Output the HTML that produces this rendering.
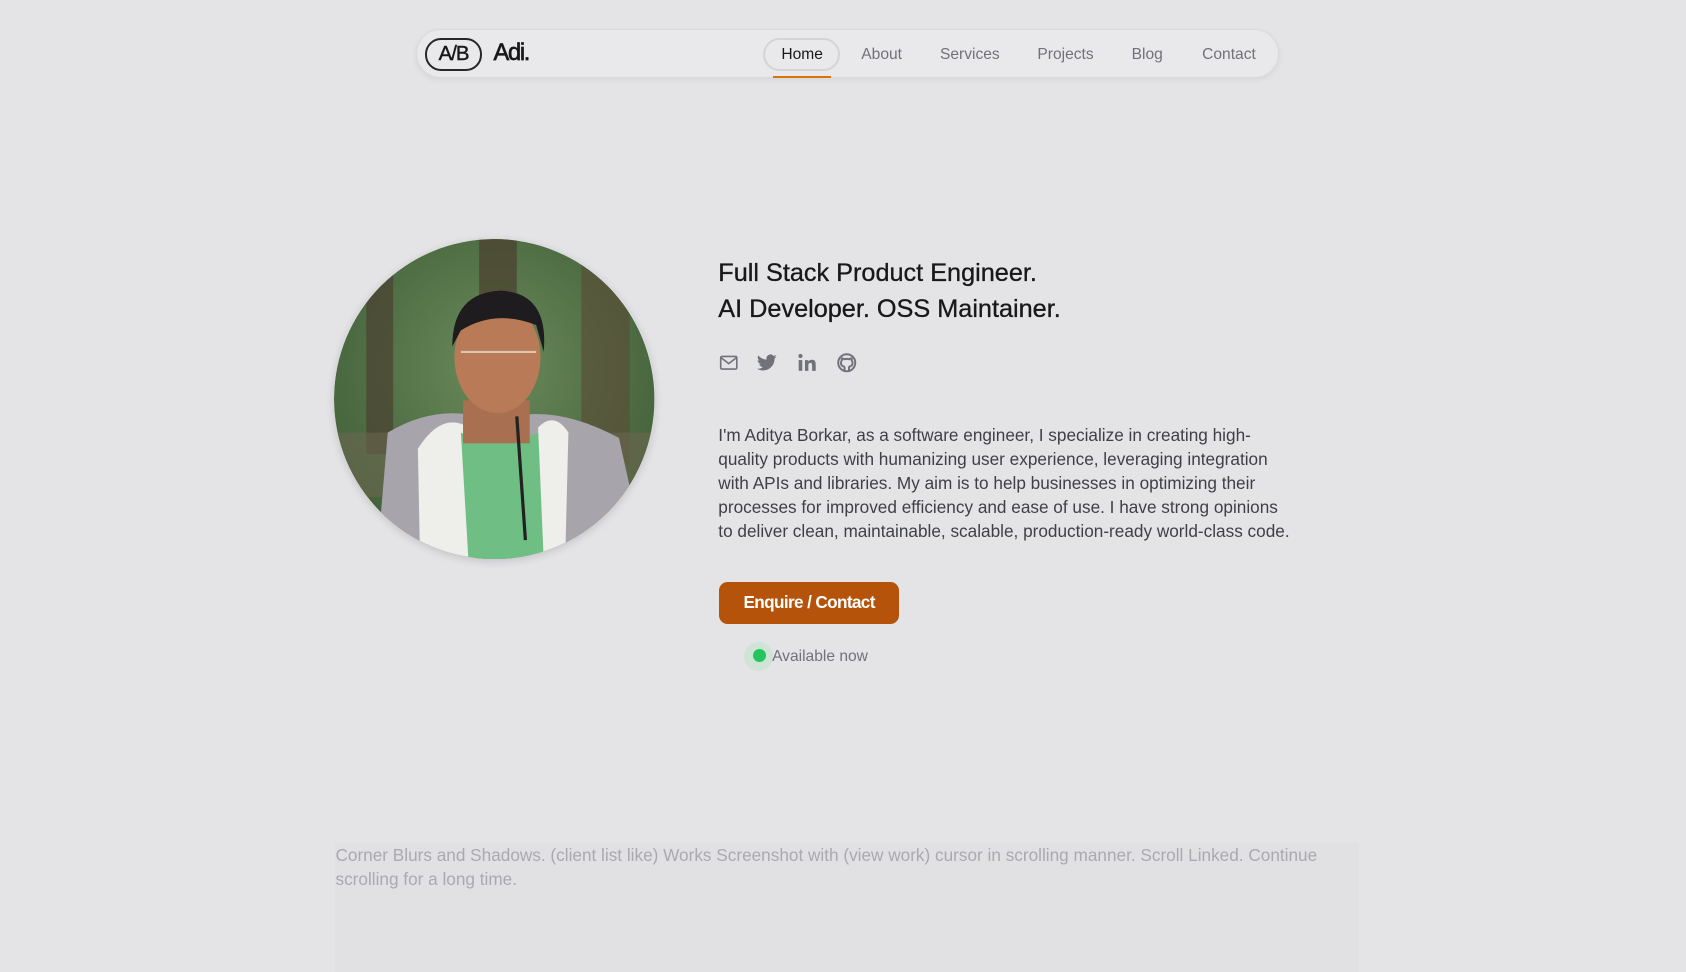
<!DOCTYPE html>
<html><head><meta charset="utf-8"><style>
html{zoom:1.0753}
body{margin:0;width:1568px;height:892px;background:#e4e4e7;font-family:"Liberation Sans",sans-serif;position:relative;overflow:hidden}
.a{position:absolute}
.nav{left:387px;top:27px;width:801px;height:44px;border-radius:23px;background:#e9e9eb;border:1px solid #d9d9dc;box-shadow:0 2px 6px rgba(0,0,0,.06)}
.ni{position:absolute;top:15px;font-size:14.5px;color:#71717a;transform:translateX(-50%)}
.ic{position:absolute;top:327px;width:20px;height:20px}
p{margin:0}
</style></head><body>
<div class="a nav">
  <div class="a" style="left:7px;top:7px;width:50px;height:27px;border:2px solid #27272a;border-radius:15px;font-size:19px;line-height:27px;text-align:center;color:#18181b;letter-spacing:-1px;-webkit-text-stroke:.4px #18181b">A/B</div>
  <div class="a" style="left:71px;top:9px;font-size:22px;color:#18181b;letter-spacing:-1.2px;-webkit-text-stroke:.6px #18181b">Adi.</div>
  <div class="a" style="left:322px;top:7px;width:68px;height:27px;border:2px solid #d4d4d8;border-radius:16px"></div>
  <div class="a" style="left:331px;top:43px;width:54px;height:2px;background:#d97706"></div>
  <div class="ni" style="left:358px;color:#18181b">Home</div>
  <div class="ni" style="left:432px">About</div>
  <div class="ni" style="left:514px">Services</div>
  <div class="ni" style="left:603px">Projects</div>
  <div class="ni" style="left:679px">Blog</div>
  <div class="ni" style="left:755px">Contact</div>
</div>
<svg class="a" style="left:311px;top:222px;border-radius:50%;box-shadow:0 2px 8px rgba(0,0,0,.15)" width="298" height="298" viewBox="0 0 298 298">
<defs><clipPath id="c"><circle cx="149" cy="149" r="149"/></clipPath>
<radialGradient id="g" cx=".5" cy=".4" r=".7"><stop offset="0" stop-color="#6a8a5a"/><stop offset="1" stop-color="#3d5a35"/></radialGradient></defs>
<g clip-path="url(#c)">
<rect width="298" height="298" fill="url(#g)"/>
<rect x="30" y="0" width="25" height="200" fill="#4a4030" opacity=".7"/>
<rect x="135" y="0" width="35" height="120" fill="#4a3f2e" opacity=".7"/>
<rect x="230" y="20" width="45" height="190" fill="#5a4a35" opacity=".6"/>
<rect x="0" y="180" width="298" height="60" fill="#6b6650" opacity=".6"/>
<path d="M40 298 L50 180 Q100 150 150 170 Q200 150 265 185 L290 298Z" fill="#a7a4ab"/>
<path d="M80 298 L78 195 Q100 160 125 175 L130 298Z" fill="#eeeeea"/>
<path d="M185 298 L190 175 Q205 160 218 180 L215 298Z" fill="#eeeeea"/>
<path d="M125 298 L118 180 Q150 200 190 180 L195 298Z" fill="#6fbf85"/>
<rect x="120" y="150" width="62" height="40" fill="#a86f50"/>
<ellipse cx="152" cy="110" rx="40" ry="52" fill="#b97a58"/>
<path d="M110 100 Q110 50 155 48 Q200 50 195 105 L188 80 Q150 65 118 85Z" fill="#1e1c1f"/>
<path d="M118 105h70" stroke="#d9c7b0" stroke-width="2"/>
<path d="M170 165 L178 280" stroke="#222" stroke-width="3"/>
</g></svg>
<div class="a" style="left:668px;top:237px;font-size:23.5px;line-height:34px;color:#18181b;-webkit-text-stroke:.3px #18181b">Full Stack Product Engineer.<br>AI Developer. OSS Maintainer.</div>
<svg class="ic" style="left:668px" viewBox="0 0 24 24" fill="none" stroke="#71717a" stroke-width="1.8"><rect x="3" y="5" width="18" height="14" rx="1.5"/><path d="M3 6l9 7 9-7"/></svg>
<svg class="ic" style="left:703px" viewBox="0 0 24 24" fill="#71717a"><path d="M23 5c-.8.4-1.7.6-2.6.7.9-.6 1.6-1.4 2-2.5-.9.5-1.9.9-2.9 1.1a4.5 4.5 0 0 0-7.7 4.1C8 8.2 4.7 6.4 2.5 3.7a4.5 4.5 0 0 0 1.4 6c-.7 0-1.4-.2-2-.6 0 2.2 1.5 4 3.6 4.4-.7.2-1.4.2-2 .1.6 1.8 2.3 3.1 4.2 3.1A9 9 0 0 1 1 18.6 12.8 12.8 0 0 0 20.7 7.2c.9-.6 1.7-1.4 2.3-2.2z"/></svg>
<svg class="ic" style="left:740px" viewBox="0 0 24 24" fill="#71717a"><rect x="3" y="9" width="4" height="12"/><circle cx="5" cy="4.5" r="2.3"/><path d="M10 9h3.8v1.7c.6-1 1.9-2 3.9-2 4 0 4.3 2.6 4.3 6V21h-4v-5.5c0-1.5 0-3.3-2-3.3s-2.2 1.6-2.2 3.2V21H10z"/></svg>
<svg class="ic" style="left:777px" viewBox="0 0 24 24" fill="none" stroke="#71717a" stroke-width="2.2" stroke-linecap="round" stroke-linejoin="round"><circle cx="12" cy="12" r="9.5"/><path d="M9.5 21v-3c0-.8.1-1.2-.4-1.7C7 16 5.5 15 5.5 12c0-1 .4-1.8 1-2.4-.1-.3-.4-1.2.1-2.5 0 0 .8-.3 2.6 1a9 9 0 0 1 5.6 0c1.8-1.3 2.6-1 2.6-1 .5 1.3.2 2.2.1 2.5.6.6 1 1.4 1 2.4 0 3-1.5 4-3.6 4.3-.5.5-.4 1-.4 1.7v3"/></svg>
<p class="a" style="left:668px;top:393px;width:536px;font-size:16px;line-height:22.4px;color:#3f3f46">I'm Aditya Borkar, as a software engineer, I specialize in creating high-quality products with humanizing user experience, leveraging integration with APIs and libraries. My aim is to help businesses in optimizing their processes for improved efficiency and ease of use. I have strong opinions to deliver clean, maintainable, scalable, production-ready world-class code.</p>
<div class="a" style="left:669px;top:541px;width:167px;height:39px;border-radius:8px;background:#b45309;color:#fff;font-weight:bold;font-size:16px;line-height:39px;text-align:center;letter-spacing:-.6px">Enquire / Contact</div>
<div class="a" style="left:692px;top:597px;width:27px;height:27px;border-radius:50%;background:#cfe3d6"></div>
<div class="a" style="left:700px;top:604px;width:12px;height:12px;border-radius:50%;background:#22c55e"></div>
<div class="a" style="left:718px;top:603px;font-size:14.5px;color:#71717a">Available now</div>
<div class="a" style="left:312px;top:784px;width:952px;height:120px;background:#e1e1e4"></div>
<p class="a" style="left:312px;top:784px;width:930px;font-size:16px;line-height:22.4px;color:#a9a9b0">Corner Blurs and Shadows. (client list like) Works Screenshot with (view work) cursor in scrolling manner. Scroll Linked. Continue scrolling for a long time.</p>
</body></html>
